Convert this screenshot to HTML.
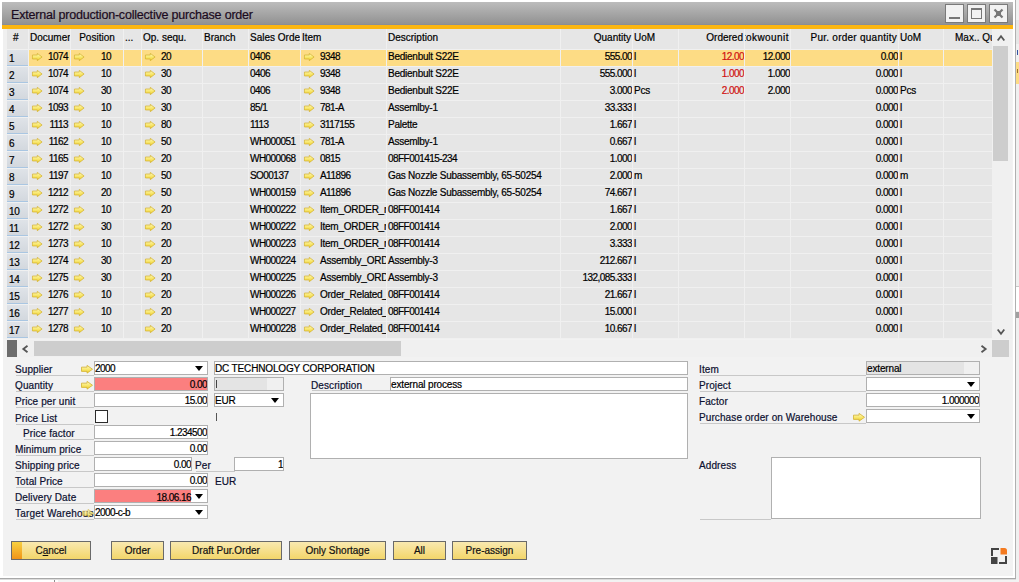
<!DOCTYPE html><html><head><meta charset="utf-8"><style>
*{box-sizing:border-box}
body{margin:0;-webkit-text-stroke:0.2px currentColor;width:1019px;height:582px;overflow:hidden;position:relative;background:#fff;font-family:"Liberation Sans",sans-serif;font-size:10px;color:#000}
.a{position:absolute}
.t{position:absolute;white-space:pre;line-height:12px}
.hd{position:absolute;top:29px;height:20px;background:#e6e6e6}
.c{position:absolute;height:16px;background:#e6e6e6;overflow:hidden}
.sel{background:#fddc85}
.rh{position:absolute;height:16px;background:linear-gradient(#dfe3e8,#d3d8de);border-bottom:1px solid #a9c6e2}
.ct{position:absolute;white-space:pre;top:1px;line-height:12px;font-size:10px;letter-spacing:-0.25px}
.lbl{position:absolute;white-space:pre;line-height:12px;color:#0c1030;letter-spacing:0.1px}
.ul{position:absolute;height:1px;background:#c8c8c8}
.in{position:absolute;background:#fff;border:1px solid #b0b0b0;height:14px;overflow:hidden}
.in span{position:absolute;white-space:pre;top:1px;line-height:12px;font-size:9px}
.tri{position:absolute;width:0;height:0;border-left:4.5px solid transparent;border-right:4.5px solid transparent;border-top:5px solid #000}
.btn{position:absolute;top:541px;height:19px;border:1px solid #6a6a6a;background:linear-gradient(#f9e9b0,#f3d66a);text-align:center;line-height:18px;font-size:10px;color:#111}
</style></head><body>
<svg width="0" height="0" style="position:absolute"><defs><linearGradient id="ag" x1="0" y1="0" x2="0" y2="1"><stop offset="0" stop-color="#fdf8c0"/><stop offset="0.45" stop-color="#f9ea78"/><stop offset="1" stop-color="#f0cf2a"/></linearGradient></defs></svg>

<div class="a" style="left:1016px;top:0;width:3px;height:582px;background:#f0f0f0"></div>
<div class="a" style="left:1015px;top:0;width:1px;height:579px;background:#b0b0b0"></div>
<div class="a" style="left:1016px;top:20px;width:3px;height:24px;background:#e6e6e6"></div>
<div class="a" style="left:1016px;top:62px;width:3px;height:22px;background:#fddc85"></div>
<div class="a" style="left:1017px;top:50px;width:1px;height:5px;background:#3050a0"></div>
<div class="a" style="left:1017px;top:69px;width:1px;height:4px;background:#a07030"></div>
<div class="a" style="left:1016px;top:286px;width:3px;height:1px;background:#c8c8c8"></div>
<div class="a" style="left:1016px;top:287px;width:3px;height:24px;background:#ffffff"></div>
<div class="a" style="left:1016px;top:312px;width:3px;height:6px;background:#a0a0a0"></div>
<div class="a" style="left:0;top:578px;width:1016px;height:1px;background:#a8a8a8"></div>
<div class="a" style="left:58px;top:579px;width:961px;height:3px;background:#f2f2f2"></div>
<div class="a" style="left:0;top:579px;width:1016px;height:1px;background:#dcdcdc"></div>
<div class="a" style="left:54px;top:580px;width:1px;height:2px;background:#8c8c8c"></div>
<div class="a" style="left:3px;top:2px;width:1010px;height:574px;background:#f2f2f2"></div>
<div class="a" style="left:2px;top:2px;width:1011px;height:22px;background:linear-gradient(#bcbcbc,#929292)"></div>
<div class="a" style="left:2px;top:24px;width:1011px;height:1px;background:#8a8e96"></div>
<div class="a" style="left:2px;top:25px;width:1011px;height:4px;background:#fbb611"></div>
<div class="t" style="left:11px;top:8px;font-size:12.5px;letter-spacing:-0.2px;line-height:15px;color:#1a0a20">External production-collective purchase order</div>
<div class="a" style="left:945px;top:4px;width:19px;height:19px;background:#f2f2f2;border:1px solid #7a7a7a"></div>
<div class="a" style="left:967px;top:4px;width:19px;height:19px;background:#f2f2f2;border:1px solid #7a7a7a"></div>
<div class="a" style="left:989px;top:4px;width:19px;height:19px;background:#f2f2f2;border:1px solid #7a7a7a"></div>
<div class="a" style="left:949px;top:17px;width:11px;height:2px;background:#777"></div>
<div class="a" style="left:971px;top:8px;width:11px;height:11px;border:1px solid #777;border-top-width:2px"></div>
<svg class="a" style="left:993px;top:8px" width="11" height="11" viewBox="0 0 11 11"><path d="M1.5 1.5L9.5 9.5M9.5 1.5L1.5 9.5" stroke="#777" stroke-width="2.2"/><rect x="3" y="3" width="5" height="5" fill="#777"/></svg>
<div class="a" style="left:3px;top:29px;width:990px;height:310px;background:#f0f0f0"></div>
<div class="hd" style="left:7px;width:21px;overflow:hidden">
<div class="t" style="left:6px;top:3px">#</div>
</div>
<div class="hd" style="left:29px;width:41px;overflow:hidden">
<div class="t" style="left:1px;top:3px">Documer</div>
</div>
<div class="hd" style="left:71px;width:52px;overflow:hidden">
<div class="t" style="left:0;width:52px;text-align:center;top:3px">Position</div>
</div>
<div class="hd" style="left:124px;width:17px;overflow:hidden">
<div class="t" style="left:1px;top:3px">...</div>
</div>
<div class="hd" style="left:142px;width:60px;overflow:hidden">
<div class="t" style="left:1px;top:3px">Op. sequ.</div>
</div>
<div class="hd" style="left:203px;width:45px;overflow:hidden">
<div class="t" style="left:1px;top:3px">Branch</div>
</div>
<div class="hd" style="left:249px;width:51px;overflow:hidden">
<div class="t" style="left:1px;top:3px">Sales Order</div>
</div>
<div class="hd" style="left:301px;width:85px;overflow:hidden">
<div class="t" style="left:1px;top:3px">Item</div>
</div>
<div class="hd" style="left:387px;width:173px;overflow:hidden">
<div class="t" style="left:1px;top:3px">Description</div>
</div>
<div class="hd" style="left:561px;width:71px;overflow:hidden">
<div class="t" style="right:1px;top:3px">Quantity</div>
</div>
<div class="hd" style="left:633px;width:45px;overflow:hidden">
<div class="t" style="left:1px;top:3px">UoM</div>
</div>
<div class="hd" style="left:679px;width:65px;overflow:hidden">
<div class="t" style="right:1px;top:3px">Ordered</div>
</div>
<div class="hd" style="left:745px;width:45px;overflow:hidden">
<div class="t" style="right:1px;top:3px;letter-spacing:0.45px">Stokwounit</div>
</div>
<div class="hd" style="left:791px;width:107px;overflow:hidden">
<div class="t" style="right:1px;top:3px;letter-spacing:0.25px">Pur. order quantity</div>
</div>
<div class="hd" style="left:899px;width:44px;overflow:hidden">
<div class="t" style="left:1px;top:3px">UoM</div>
</div>
<div class="hd" style="left:944px;width:48px;overflow:hidden">
<div class="t" style="left:11px;top:3px">Max.. Quantity</div>
</div>
<div class="rh" style="left:7px;top:50px;width:21px"><div class="ct" style="left:2px;top:3px;font-size:10px;letter-spacing:-0.3px">1</div></div>
<div class="c sel" style="left:29px;top:50px;width:41px">
<svg style="position:absolute;left:3px;top:2.6px;overflow:visible" width="10.5" height="8" viewBox="0 0 10.5 8" preserveAspectRatio="none"><path d="M0.45 2.0H5.3V0.35L10.1 4L5.3 7.65V6.0H0.45Z" fill="url(#ag)" stroke="#d2b02e" stroke-width="0.7" stroke-linejoin="round"/></svg>
<div class="ct" style="right:2px;font-size:10px;letter-spacing:-0.55px">1074</div>
</div>
<div class="c sel" style="left:71px;top:50px;width:52px">
<svg style="position:absolute;left:3px;top:2.6px;overflow:visible" width="10.5" height="8" viewBox="0 0 10.5 8" preserveAspectRatio="none"><path d="M0.45 2.0H5.3V0.35L10.1 4L5.3 7.65V6.0H0.45Z" fill="url(#ag)" stroke="#d2b02e" stroke-width="0.7" stroke-linejoin="round"/></svg>
<div class="ct" style="right:12px;font-size:10px;letter-spacing:-0.55px">10</div>
</div>
<div class="c sel" style="left:124px;top:50px;width:17px">
</div>
<div class="c sel" style="left:142px;top:50px;width:60px">
<svg style="position:absolute;left:3px;top:2.6px;overflow:visible" width="10.5" height="8" viewBox="0 0 10.5 8" preserveAspectRatio="none"><path d="M0.45 2.0H5.3V0.35L10.1 4L5.3 7.65V6.0H0.45Z" fill="url(#ag)" stroke="#d2b02e" stroke-width="0.7" stroke-linejoin="round"/></svg>
<div class="ct" style="left:19px;font-size:10px;letter-spacing:-0.55px">20</div>
</div>
<div class="c sel" style="left:203px;top:50px;width:45px">
</div>
<div class="c sel" style="left:249px;top:50px;width:51px">
<div class="ct" style="left:1px;font-size:10px;letter-spacing:-0.55px">0406</div>
</div>
<div class="c sel" style="left:301px;top:50px;width:85px">
<svg style="position:absolute;left:3px;top:2.6px;overflow:visible" width="10.5" height="8" viewBox="0 0 10.5 8" preserveAspectRatio="none"><path d="M0.45 2.0H5.3V0.35L10.1 4L5.3 7.65V6.0H0.45Z" fill="url(#ag)" stroke="#d2b02e" stroke-width="0.7" stroke-linejoin="round"/></svg>
<div class="ct" style="left:19px;font-size:10px;letter-spacing:-0.55px">9348</div>
</div>
<div class="c sel" style="left:387px;top:50px;width:173px">
<div class="ct" style="left:1px">Bedienbult S22E</div>
</div>
<div class="c sel" style="left:561px;top:50px;width:71px">
<div class="ct" style="right:0px;font-size:10px;letter-spacing:-0.55px">555.00</div>
</div>
<div class="c sel" style="left:633px;top:50px;width:45px">
<div class="ct" style="left:1px">l</div>
</div>
<div class="c sel" style="left:679px;top:50px;width:65px">
<div class="ct" style="right:0px;font-size:10px;letter-spacing:-0.55px;color:#d01010">12.00</div>
</div>
<div class="c sel" style="left:745px;top:50px;width:45px">
<div class="ct" style="right:0px;font-size:10px;letter-spacing:-0.55px">12.000</div>
</div>
<div class="c sel" style="left:791px;top:50px;width:107px">
<div class="ct" style="right:0px;font-size:10px;letter-spacing:-0.55px">0.00</div>
</div>
<div class="c sel" style="left:899px;top:50px;width:44px">
<div class="ct" style="left:1px">l</div>
</div>
<div class="c sel" style="left:944px;top:50px;width:48px">
</div>
<div class="rh" style="left:7px;top:67px;width:21px"><div class="ct" style="left:2px;top:3px;font-size:10px;letter-spacing:-0.3px">2</div></div>
<div class="c" style="left:29px;top:67px;width:41px">
<svg style="position:absolute;left:3px;top:2.6px;overflow:visible" width="10.5" height="8" viewBox="0 0 10.5 8" preserveAspectRatio="none"><path d="M0.45 2.0H5.3V0.35L10.1 4L5.3 7.65V6.0H0.45Z" fill="url(#ag)" stroke="#d2b02e" stroke-width="0.7" stroke-linejoin="round"/></svg>
<div class="ct" style="right:2px;font-size:10px;letter-spacing:-0.55px">1074</div>
</div>
<div class="c" style="left:71px;top:67px;width:52px">
<svg style="position:absolute;left:3px;top:2.6px;overflow:visible" width="10.5" height="8" viewBox="0 0 10.5 8" preserveAspectRatio="none"><path d="M0.45 2.0H5.3V0.35L10.1 4L5.3 7.65V6.0H0.45Z" fill="url(#ag)" stroke="#d2b02e" stroke-width="0.7" stroke-linejoin="round"/></svg>
<div class="ct" style="right:12px;font-size:10px;letter-spacing:-0.55px">10</div>
</div>
<div class="c" style="left:124px;top:67px;width:17px">
</div>
<div class="c" style="left:142px;top:67px;width:60px">
<svg style="position:absolute;left:3px;top:2.6px;overflow:visible" width="10.5" height="8" viewBox="0 0 10.5 8" preserveAspectRatio="none"><path d="M0.45 2.0H5.3V0.35L10.1 4L5.3 7.65V6.0H0.45Z" fill="url(#ag)" stroke="#d2b02e" stroke-width="0.7" stroke-linejoin="round"/></svg>
<div class="ct" style="left:19px;font-size:10px;letter-spacing:-0.55px">30</div>
</div>
<div class="c" style="left:203px;top:67px;width:45px">
</div>
<div class="c" style="left:249px;top:67px;width:51px">
<div class="ct" style="left:1px;font-size:10px;letter-spacing:-0.55px">0406</div>
</div>
<div class="c" style="left:301px;top:67px;width:85px">
<svg style="position:absolute;left:3px;top:2.6px;overflow:visible" width="10.5" height="8" viewBox="0 0 10.5 8" preserveAspectRatio="none"><path d="M0.45 2.0H5.3V0.35L10.1 4L5.3 7.65V6.0H0.45Z" fill="url(#ag)" stroke="#d2b02e" stroke-width="0.7" stroke-linejoin="round"/></svg>
<div class="ct" style="left:19px;font-size:10px;letter-spacing:-0.55px">9348</div>
</div>
<div class="c" style="left:387px;top:67px;width:173px">
<div class="ct" style="left:1px">Bedienbult S22E</div>
</div>
<div class="c" style="left:561px;top:67px;width:71px">
<div class="ct" style="right:0px;font-size:10px;letter-spacing:-0.55px">555.000</div>
</div>
<div class="c" style="left:633px;top:67px;width:45px">
<div class="ct" style="left:1px">l</div>
</div>
<div class="c" style="left:679px;top:67px;width:65px">
<div class="ct" style="right:0px;font-size:10px;letter-spacing:-0.55px;color:#d01010">1.000</div>
</div>
<div class="c" style="left:745px;top:67px;width:45px">
<div class="ct" style="right:0px;font-size:10px;letter-spacing:-0.55px">1.000</div>
</div>
<div class="c" style="left:791px;top:67px;width:107px">
<div class="ct" style="right:0px;font-size:10px;letter-spacing:-0.55px">0.000</div>
</div>
<div class="c" style="left:899px;top:67px;width:44px">
<div class="ct" style="left:1px">l</div>
</div>
<div class="c" style="left:944px;top:67px;width:48px">
</div>
<div class="rh" style="left:7px;top:84px;width:21px"><div class="ct" style="left:2px;top:3px;font-size:10px;letter-spacing:-0.3px">3</div></div>
<div class="c" style="left:29px;top:84px;width:41px">
<svg style="position:absolute;left:3px;top:2.6px;overflow:visible" width="10.5" height="8" viewBox="0 0 10.5 8" preserveAspectRatio="none"><path d="M0.45 2.0H5.3V0.35L10.1 4L5.3 7.65V6.0H0.45Z" fill="url(#ag)" stroke="#d2b02e" stroke-width="0.7" stroke-linejoin="round"/></svg>
<div class="ct" style="right:2px;font-size:10px;letter-spacing:-0.55px">1074</div>
</div>
<div class="c" style="left:71px;top:84px;width:52px">
<svg style="position:absolute;left:3px;top:2.6px;overflow:visible" width="10.5" height="8" viewBox="0 0 10.5 8" preserveAspectRatio="none"><path d="M0.45 2.0H5.3V0.35L10.1 4L5.3 7.65V6.0H0.45Z" fill="url(#ag)" stroke="#d2b02e" stroke-width="0.7" stroke-linejoin="round"/></svg>
<div class="ct" style="right:12px;font-size:10px;letter-spacing:-0.55px">30</div>
</div>
<div class="c" style="left:124px;top:84px;width:17px">
</div>
<div class="c" style="left:142px;top:84px;width:60px">
<svg style="position:absolute;left:3px;top:2.6px;overflow:visible" width="10.5" height="8" viewBox="0 0 10.5 8" preserveAspectRatio="none"><path d="M0.45 2.0H5.3V0.35L10.1 4L5.3 7.65V6.0H0.45Z" fill="url(#ag)" stroke="#d2b02e" stroke-width="0.7" stroke-linejoin="round"/></svg>
<div class="ct" style="left:19px;font-size:10px;letter-spacing:-0.55px">30</div>
</div>
<div class="c" style="left:203px;top:84px;width:45px">
</div>
<div class="c" style="left:249px;top:84px;width:51px">
<div class="ct" style="left:1px;font-size:10px;letter-spacing:-0.55px">0406</div>
</div>
<div class="c" style="left:301px;top:84px;width:85px">
<svg style="position:absolute;left:3px;top:2.6px;overflow:visible" width="10.5" height="8" viewBox="0 0 10.5 8" preserveAspectRatio="none"><path d="M0.45 2.0H5.3V0.35L10.1 4L5.3 7.65V6.0H0.45Z" fill="url(#ag)" stroke="#d2b02e" stroke-width="0.7" stroke-linejoin="round"/></svg>
<div class="ct" style="left:19px;font-size:10px;letter-spacing:-0.55px">9348</div>
</div>
<div class="c" style="left:387px;top:84px;width:173px">
<div class="ct" style="left:1px">Bedienbult S22E</div>
</div>
<div class="c" style="left:561px;top:84px;width:71px">
<div class="ct" style="right:0px;font-size:10px;letter-spacing:-0.55px">3.000</div>
</div>
<div class="c" style="left:633px;top:84px;width:45px">
<div class="ct" style="left:1px">Pcs</div>
</div>
<div class="c" style="left:679px;top:84px;width:65px">
<div class="ct" style="right:0px;font-size:10px;letter-spacing:-0.55px;color:#d01010">2.000</div>
</div>
<div class="c" style="left:745px;top:84px;width:45px">
<div class="ct" style="right:0px;font-size:10px;letter-spacing:-0.55px">2.000</div>
</div>
<div class="c" style="left:791px;top:84px;width:107px">
<div class="ct" style="right:0px;font-size:10px;letter-spacing:-0.55px">0.000</div>
</div>
<div class="c" style="left:899px;top:84px;width:44px">
<div class="ct" style="left:1px">Pcs</div>
</div>
<div class="c" style="left:944px;top:84px;width:48px">
</div>
<div class="rh" style="left:7px;top:101px;width:21px"><div class="ct" style="left:2px;top:3px;font-size:10px;letter-spacing:-0.3px">4</div></div>
<div class="c" style="left:29px;top:101px;width:41px">
<svg style="position:absolute;left:3px;top:2.6px;overflow:visible" width="10.5" height="8" viewBox="0 0 10.5 8" preserveAspectRatio="none"><path d="M0.45 2.0H5.3V0.35L10.1 4L5.3 7.65V6.0H0.45Z" fill="url(#ag)" stroke="#d2b02e" stroke-width="0.7" stroke-linejoin="round"/></svg>
<div class="ct" style="right:2px;font-size:10px;letter-spacing:-0.55px">1093</div>
</div>
<div class="c" style="left:71px;top:101px;width:52px">
<svg style="position:absolute;left:3px;top:2.6px;overflow:visible" width="10.5" height="8" viewBox="0 0 10.5 8" preserveAspectRatio="none"><path d="M0.45 2.0H5.3V0.35L10.1 4L5.3 7.65V6.0H0.45Z" fill="url(#ag)" stroke="#d2b02e" stroke-width="0.7" stroke-linejoin="round"/></svg>
<div class="ct" style="right:12px;font-size:10px;letter-spacing:-0.55px">10</div>
</div>
<div class="c" style="left:124px;top:101px;width:17px">
</div>
<div class="c" style="left:142px;top:101px;width:60px">
<svg style="position:absolute;left:3px;top:2.6px;overflow:visible" width="10.5" height="8" viewBox="0 0 10.5 8" preserveAspectRatio="none"><path d="M0.45 2.0H5.3V0.35L10.1 4L5.3 7.65V6.0H0.45Z" fill="url(#ag)" stroke="#d2b02e" stroke-width="0.7" stroke-linejoin="round"/></svg>
<div class="ct" style="left:19px;font-size:10px;letter-spacing:-0.55px">30</div>
</div>
<div class="c" style="left:203px;top:101px;width:45px">
</div>
<div class="c" style="left:249px;top:101px;width:51px">
<div class="ct" style="left:1px;font-size:10px;letter-spacing:-0.55px">85/1</div>
</div>
<div class="c" style="left:301px;top:101px;width:85px">
<svg style="position:absolute;left:3px;top:2.6px;overflow:visible" width="10.5" height="8" viewBox="0 0 10.5 8" preserveAspectRatio="none"><path d="M0.45 2.0H5.3V0.35L10.1 4L5.3 7.65V6.0H0.45Z" fill="url(#ag)" stroke="#d2b02e" stroke-width="0.7" stroke-linejoin="round"/></svg>
<div class="ct" style="left:19px;font-size:10px;letter-spacing:-0.55px">781-A</div>
</div>
<div class="c" style="left:387px;top:101px;width:173px">
<div class="ct" style="left:1px">Assemlby-1</div>
</div>
<div class="c" style="left:561px;top:101px;width:71px">
<div class="ct" style="right:0px;font-size:10px;letter-spacing:-0.55px">33.333</div>
</div>
<div class="c" style="left:633px;top:101px;width:45px">
<div class="ct" style="left:1px">l</div>
</div>
<div class="c" style="left:679px;top:101px;width:65px">
</div>
<div class="c" style="left:745px;top:101px;width:45px">
</div>
<div class="c" style="left:791px;top:101px;width:107px">
<div class="ct" style="right:0px;font-size:10px;letter-spacing:-0.55px">0.000</div>
</div>
<div class="c" style="left:899px;top:101px;width:44px">
<div class="ct" style="left:1px">l</div>
</div>
<div class="c" style="left:944px;top:101px;width:48px">
</div>
<div class="rh" style="left:7px;top:118px;width:21px"><div class="ct" style="left:2px;top:3px;font-size:10px;letter-spacing:-0.3px">5</div></div>
<div class="c" style="left:29px;top:118px;width:41px">
<svg style="position:absolute;left:3px;top:2.6px;overflow:visible" width="10.5" height="8" viewBox="0 0 10.5 8" preserveAspectRatio="none"><path d="M0.45 2.0H5.3V0.35L10.1 4L5.3 7.65V6.0H0.45Z" fill="url(#ag)" stroke="#d2b02e" stroke-width="0.7" stroke-linejoin="round"/></svg>
<div class="ct" style="right:2px;font-size:10px;letter-spacing:-0.55px">1113</div>
</div>
<div class="c" style="left:71px;top:118px;width:52px">
<svg style="position:absolute;left:3px;top:2.6px;overflow:visible" width="10.5" height="8" viewBox="0 0 10.5 8" preserveAspectRatio="none"><path d="M0.45 2.0H5.3V0.35L10.1 4L5.3 7.65V6.0H0.45Z" fill="url(#ag)" stroke="#d2b02e" stroke-width="0.7" stroke-linejoin="round"/></svg>
<div class="ct" style="right:12px;font-size:10px;letter-spacing:-0.55px">10</div>
</div>
<div class="c" style="left:124px;top:118px;width:17px">
</div>
<div class="c" style="left:142px;top:118px;width:60px">
<svg style="position:absolute;left:3px;top:2.6px;overflow:visible" width="10.5" height="8" viewBox="0 0 10.5 8" preserveAspectRatio="none"><path d="M0.45 2.0H5.3V0.35L10.1 4L5.3 7.65V6.0H0.45Z" fill="url(#ag)" stroke="#d2b02e" stroke-width="0.7" stroke-linejoin="round"/></svg>
<div class="ct" style="left:19px;font-size:10px;letter-spacing:-0.55px">80</div>
</div>
<div class="c" style="left:203px;top:118px;width:45px">
</div>
<div class="c" style="left:249px;top:118px;width:51px">
<div class="ct" style="left:1px;font-size:10px;letter-spacing:-0.55px">1113</div>
</div>
<div class="c" style="left:301px;top:118px;width:85px">
<svg style="position:absolute;left:3px;top:2.6px;overflow:visible" width="10.5" height="8" viewBox="0 0 10.5 8" preserveAspectRatio="none"><path d="M0.45 2.0H5.3V0.35L10.1 4L5.3 7.65V6.0H0.45Z" fill="url(#ag)" stroke="#d2b02e" stroke-width="0.7" stroke-linejoin="round"/></svg>
<div class="ct" style="left:19px;font-size:10px;letter-spacing:-0.55px">3117155</div>
</div>
<div class="c" style="left:387px;top:118px;width:173px">
<div class="ct" style="left:1px">Palette</div>
</div>
<div class="c" style="left:561px;top:118px;width:71px">
<div class="ct" style="right:0px;font-size:10px;letter-spacing:-0.55px">1.667</div>
</div>
<div class="c" style="left:633px;top:118px;width:45px">
<div class="ct" style="left:1px">l</div>
</div>
<div class="c" style="left:679px;top:118px;width:65px">
</div>
<div class="c" style="left:745px;top:118px;width:45px">
</div>
<div class="c" style="left:791px;top:118px;width:107px">
<div class="ct" style="right:0px;font-size:10px;letter-spacing:-0.55px">0.000</div>
</div>
<div class="c" style="left:899px;top:118px;width:44px">
<div class="ct" style="left:1px">l</div>
</div>
<div class="c" style="left:944px;top:118px;width:48px">
</div>
<div class="rh" style="left:7px;top:135px;width:21px"><div class="ct" style="left:2px;top:3px;font-size:10px;letter-spacing:-0.3px">6</div></div>
<div class="c" style="left:29px;top:135px;width:41px">
<svg style="position:absolute;left:3px;top:2.6px;overflow:visible" width="10.5" height="8" viewBox="0 0 10.5 8" preserveAspectRatio="none"><path d="M0.45 2.0H5.3V0.35L10.1 4L5.3 7.65V6.0H0.45Z" fill="url(#ag)" stroke="#d2b02e" stroke-width="0.7" stroke-linejoin="round"/></svg>
<div class="ct" style="right:2px;font-size:10px;letter-spacing:-0.55px">1162</div>
</div>
<div class="c" style="left:71px;top:135px;width:52px">
<svg style="position:absolute;left:3px;top:2.6px;overflow:visible" width="10.5" height="8" viewBox="0 0 10.5 8" preserveAspectRatio="none"><path d="M0.45 2.0H5.3V0.35L10.1 4L5.3 7.65V6.0H0.45Z" fill="url(#ag)" stroke="#d2b02e" stroke-width="0.7" stroke-linejoin="round"/></svg>
<div class="ct" style="right:12px;font-size:10px;letter-spacing:-0.55px">10</div>
</div>
<div class="c" style="left:124px;top:135px;width:17px">
</div>
<div class="c" style="left:142px;top:135px;width:60px">
<svg style="position:absolute;left:3px;top:2.6px;overflow:visible" width="10.5" height="8" viewBox="0 0 10.5 8" preserveAspectRatio="none"><path d="M0.45 2.0H5.3V0.35L10.1 4L5.3 7.65V6.0H0.45Z" fill="url(#ag)" stroke="#d2b02e" stroke-width="0.7" stroke-linejoin="round"/></svg>
<div class="ct" style="left:19px;font-size:10px;letter-spacing:-0.55px">50</div>
</div>
<div class="c" style="left:203px;top:135px;width:45px">
</div>
<div class="c" style="left:249px;top:135px;width:51px">
<div class="ct" style="left:1px;font-size:10px;letter-spacing:-0.55px">WH000051</div>
</div>
<div class="c" style="left:301px;top:135px;width:85px">
<svg style="position:absolute;left:3px;top:2.6px;overflow:visible" width="10.5" height="8" viewBox="0 0 10.5 8" preserveAspectRatio="none"><path d="M0.45 2.0H5.3V0.35L10.1 4L5.3 7.65V6.0H0.45Z" fill="url(#ag)" stroke="#d2b02e" stroke-width="0.7" stroke-linejoin="round"/></svg>
<div class="ct" style="left:19px;font-size:10px;letter-spacing:-0.55px">781-A</div>
</div>
<div class="c" style="left:387px;top:135px;width:173px">
<div class="ct" style="left:1px">Assemlby-1</div>
</div>
<div class="c" style="left:561px;top:135px;width:71px">
<div class="ct" style="right:0px;font-size:10px;letter-spacing:-0.55px">0.667</div>
</div>
<div class="c" style="left:633px;top:135px;width:45px">
<div class="ct" style="left:1px">l</div>
</div>
<div class="c" style="left:679px;top:135px;width:65px">
</div>
<div class="c" style="left:745px;top:135px;width:45px">
</div>
<div class="c" style="left:791px;top:135px;width:107px">
<div class="ct" style="right:0px;font-size:10px;letter-spacing:-0.55px">0.000</div>
</div>
<div class="c" style="left:899px;top:135px;width:44px">
<div class="ct" style="left:1px">l</div>
</div>
<div class="c" style="left:944px;top:135px;width:48px">
</div>
<div class="rh" style="left:7px;top:152px;width:21px"><div class="ct" style="left:2px;top:3px;font-size:10px;letter-spacing:-0.3px">7</div></div>
<div class="c" style="left:29px;top:152px;width:41px">
<svg style="position:absolute;left:3px;top:2.6px;overflow:visible" width="10.5" height="8" viewBox="0 0 10.5 8" preserveAspectRatio="none"><path d="M0.45 2.0H5.3V0.35L10.1 4L5.3 7.65V6.0H0.45Z" fill="url(#ag)" stroke="#d2b02e" stroke-width="0.7" stroke-linejoin="round"/></svg>
<div class="ct" style="right:2px;font-size:10px;letter-spacing:-0.55px">1165</div>
</div>
<div class="c" style="left:71px;top:152px;width:52px">
<svg style="position:absolute;left:3px;top:2.6px;overflow:visible" width="10.5" height="8" viewBox="0 0 10.5 8" preserveAspectRatio="none"><path d="M0.45 2.0H5.3V0.35L10.1 4L5.3 7.65V6.0H0.45Z" fill="url(#ag)" stroke="#d2b02e" stroke-width="0.7" stroke-linejoin="round"/></svg>
<div class="ct" style="right:12px;font-size:10px;letter-spacing:-0.55px">10</div>
</div>
<div class="c" style="left:124px;top:152px;width:17px">
</div>
<div class="c" style="left:142px;top:152px;width:60px">
<svg style="position:absolute;left:3px;top:2.6px;overflow:visible" width="10.5" height="8" viewBox="0 0 10.5 8" preserveAspectRatio="none"><path d="M0.45 2.0H5.3V0.35L10.1 4L5.3 7.65V6.0H0.45Z" fill="url(#ag)" stroke="#d2b02e" stroke-width="0.7" stroke-linejoin="round"/></svg>
<div class="ct" style="left:19px;font-size:10px;letter-spacing:-0.55px">20</div>
</div>
<div class="c" style="left:203px;top:152px;width:45px">
</div>
<div class="c" style="left:249px;top:152px;width:51px">
<div class="ct" style="left:1px;font-size:10px;letter-spacing:-0.55px">WH000068</div>
</div>
<div class="c" style="left:301px;top:152px;width:85px">
<svg style="position:absolute;left:3px;top:2.6px;overflow:visible" width="10.5" height="8" viewBox="0 0 10.5 8" preserveAspectRatio="none"><path d="M0.45 2.0H5.3V0.35L10.1 4L5.3 7.65V6.0H0.45Z" fill="url(#ag)" stroke="#d2b02e" stroke-width="0.7" stroke-linejoin="round"/></svg>
<div class="ct" style="left:19px;font-size:10px;letter-spacing:-0.55px">0815</div>
</div>
<div class="c" style="left:387px;top:152px;width:173px">
<div class="ct" style="left:1px;font-size:10px;letter-spacing:-0.55px">08FF001415-234</div>
</div>
<div class="c" style="left:561px;top:152px;width:71px">
<div class="ct" style="right:0px;font-size:10px;letter-spacing:-0.55px">1.000</div>
</div>
<div class="c" style="left:633px;top:152px;width:45px">
<div class="ct" style="left:1px">l</div>
</div>
<div class="c" style="left:679px;top:152px;width:65px">
</div>
<div class="c" style="left:745px;top:152px;width:45px">
</div>
<div class="c" style="left:791px;top:152px;width:107px">
<div class="ct" style="right:0px;font-size:10px;letter-spacing:-0.55px">0.000</div>
</div>
<div class="c" style="left:899px;top:152px;width:44px">
<div class="ct" style="left:1px">l</div>
</div>
<div class="c" style="left:944px;top:152px;width:48px">
</div>
<div class="rh" style="left:7px;top:169px;width:21px"><div class="ct" style="left:2px;top:3px;font-size:10px;letter-spacing:-0.3px">8</div></div>
<div class="c" style="left:29px;top:169px;width:41px">
<svg style="position:absolute;left:3px;top:2.6px;overflow:visible" width="10.5" height="8" viewBox="0 0 10.5 8" preserveAspectRatio="none"><path d="M0.45 2.0H5.3V0.35L10.1 4L5.3 7.65V6.0H0.45Z" fill="url(#ag)" stroke="#d2b02e" stroke-width="0.7" stroke-linejoin="round"/></svg>
<div class="ct" style="right:2px;font-size:10px;letter-spacing:-0.55px">1197</div>
</div>
<div class="c" style="left:71px;top:169px;width:52px">
<svg style="position:absolute;left:3px;top:2.6px;overflow:visible" width="10.5" height="8" viewBox="0 0 10.5 8" preserveAspectRatio="none"><path d="M0.45 2.0H5.3V0.35L10.1 4L5.3 7.65V6.0H0.45Z" fill="url(#ag)" stroke="#d2b02e" stroke-width="0.7" stroke-linejoin="round"/></svg>
<div class="ct" style="right:12px;font-size:10px;letter-spacing:-0.55px">10</div>
</div>
<div class="c" style="left:124px;top:169px;width:17px">
</div>
<div class="c" style="left:142px;top:169px;width:60px">
<svg style="position:absolute;left:3px;top:2.6px;overflow:visible" width="10.5" height="8" viewBox="0 0 10.5 8" preserveAspectRatio="none"><path d="M0.45 2.0H5.3V0.35L10.1 4L5.3 7.65V6.0H0.45Z" fill="url(#ag)" stroke="#d2b02e" stroke-width="0.7" stroke-linejoin="round"/></svg>
<div class="ct" style="left:19px;font-size:10px;letter-spacing:-0.55px">50</div>
</div>
<div class="c" style="left:203px;top:169px;width:45px">
</div>
<div class="c" style="left:249px;top:169px;width:51px">
<div class="ct" style="left:1px;font-size:10px;letter-spacing:-0.55px">SO00137</div>
</div>
<div class="c" style="left:301px;top:169px;width:85px">
<svg style="position:absolute;left:3px;top:2.6px;overflow:visible" width="10.5" height="8" viewBox="0 0 10.5 8" preserveAspectRatio="none"><path d="M0.45 2.0H5.3V0.35L10.1 4L5.3 7.65V6.0H0.45Z" fill="url(#ag)" stroke="#d2b02e" stroke-width="0.7" stroke-linejoin="round"/></svg>
<div class="ct" style="left:19px;font-size:10px;letter-spacing:-0.55px">A11896</div>
</div>
<div class="c" style="left:387px;top:169px;width:173px">
<div class="ct" style="left:1px">Gas Nozzle Subassembly, 65-50254</div>
</div>
<div class="c" style="left:561px;top:169px;width:71px">
<div class="ct" style="right:0px;font-size:10px;letter-spacing:-0.55px">2.000</div>
</div>
<div class="c" style="left:633px;top:169px;width:45px">
<div class="ct" style="left:1px">m</div>
</div>
<div class="c" style="left:679px;top:169px;width:65px">
</div>
<div class="c" style="left:745px;top:169px;width:45px">
</div>
<div class="c" style="left:791px;top:169px;width:107px">
<div class="ct" style="right:0px;font-size:10px;letter-spacing:-0.55px">0.000</div>
</div>
<div class="c" style="left:899px;top:169px;width:44px">
<div class="ct" style="left:1px">m</div>
</div>
<div class="c" style="left:944px;top:169px;width:48px">
</div>
<div class="rh" style="left:7px;top:186px;width:21px"><div class="ct" style="left:2px;top:3px;font-size:10px;letter-spacing:-0.3px">9</div></div>
<div class="c" style="left:29px;top:186px;width:41px">
<svg style="position:absolute;left:3px;top:2.6px;overflow:visible" width="10.5" height="8" viewBox="0 0 10.5 8" preserveAspectRatio="none"><path d="M0.45 2.0H5.3V0.35L10.1 4L5.3 7.65V6.0H0.45Z" fill="url(#ag)" stroke="#d2b02e" stroke-width="0.7" stroke-linejoin="round"/></svg>
<div class="ct" style="right:2px;font-size:10px;letter-spacing:-0.55px">1212</div>
</div>
<div class="c" style="left:71px;top:186px;width:52px">
<svg style="position:absolute;left:3px;top:2.6px;overflow:visible" width="10.5" height="8" viewBox="0 0 10.5 8" preserveAspectRatio="none"><path d="M0.45 2.0H5.3V0.35L10.1 4L5.3 7.65V6.0H0.45Z" fill="url(#ag)" stroke="#d2b02e" stroke-width="0.7" stroke-linejoin="round"/></svg>
<div class="ct" style="right:12px;font-size:10px;letter-spacing:-0.55px">20</div>
</div>
<div class="c" style="left:124px;top:186px;width:17px">
</div>
<div class="c" style="left:142px;top:186px;width:60px">
<svg style="position:absolute;left:3px;top:2.6px;overflow:visible" width="10.5" height="8" viewBox="0 0 10.5 8" preserveAspectRatio="none"><path d="M0.45 2.0H5.3V0.35L10.1 4L5.3 7.65V6.0H0.45Z" fill="url(#ag)" stroke="#d2b02e" stroke-width="0.7" stroke-linejoin="round"/></svg>
<div class="ct" style="left:19px;font-size:10px;letter-spacing:-0.55px">50</div>
</div>
<div class="c" style="left:203px;top:186px;width:45px">
</div>
<div class="c" style="left:249px;top:186px;width:51px">
<div class="ct" style="left:1px;font-size:10px;letter-spacing:-0.55px">WH000159</div>
</div>
<div class="c" style="left:301px;top:186px;width:85px">
<svg style="position:absolute;left:3px;top:2.6px;overflow:visible" width="10.5" height="8" viewBox="0 0 10.5 8" preserveAspectRatio="none"><path d="M0.45 2.0H5.3V0.35L10.1 4L5.3 7.65V6.0H0.45Z" fill="url(#ag)" stroke="#d2b02e" stroke-width="0.7" stroke-linejoin="round"/></svg>
<div class="ct" style="left:19px;font-size:10px;letter-spacing:-0.55px">A11896</div>
</div>
<div class="c" style="left:387px;top:186px;width:173px">
<div class="ct" style="left:1px">Gas Nozzle Subassembly, 65-50254</div>
</div>
<div class="c" style="left:561px;top:186px;width:71px">
<div class="ct" style="right:0px;font-size:10px;letter-spacing:-0.55px">74.667</div>
</div>
<div class="c" style="left:633px;top:186px;width:45px">
<div class="ct" style="left:1px">l</div>
</div>
<div class="c" style="left:679px;top:186px;width:65px">
</div>
<div class="c" style="left:745px;top:186px;width:45px">
</div>
<div class="c" style="left:791px;top:186px;width:107px">
<div class="ct" style="right:0px;font-size:10px;letter-spacing:-0.55px">0.000</div>
</div>
<div class="c" style="left:899px;top:186px;width:44px">
<div class="ct" style="left:1px">l</div>
</div>
<div class="c" style="left:944px;top:186px;width:48px">
</div>
<div class="rh" style="left:7px;top:203px;width:21px"><div class="ct" style="left:2px;top:3px;font-size:10px;letter-spacing:-0.3px">10</div></div>
<div class="c" style="left:29px;top:203px;width:41px">
<svg style="position:absolute;left:3px;top:2.6px;overflow:visible" width="10.5" height="8" viewBox="0 0 10.5 8" preserveAspectRatio="none"><path d="M0.45 2.0H5.3V0.35L10.1 4L5.3 7.65V6.0H0.45Z" fill="url(#ag)" stroke="#d2b02e" stroke-width="0.7" stroke-linejoin="round"/></svg>
<div class="ct" style="right:2px;font-size:10px;letter-spacing:-0.55px">1272</div>
</div>
<div class="c" style="left:71px;top:203px;width:52px">
<svg style="position:absolute;left:3px;top:2.6px;overflow:visible" width="10.5" height="8" viewBox="0 0 10.5 8" preserveAspectRatio="none"><path d="M0.45 2.0H5.3V0.35L10.1 4L5.3 7.65V6.0H0.45Z" fill="url(#ag)" stroke="#d2b02e" stroke-width="0.7" stroke-linejoin="round"/></svg>
<div class="ct" style="right:12px;font-size:10px;letter-spacing:-0.55px">10</div>
</div>
<div class="c" style="left:124px;top:203px;width:17px">
</div>
<div class="c" style="left:142px;top:203px;width:60px">
<svg style="position:absolute;left:3px;top:2.6px;overflow:visible" width="10.5" height="8" viewBox="0 0 10.5 8" preserveAspectRatio="none"><path d="M0.45 2.0H5.3V0.35L10.1 4L5.3 7.65V6.0H0.45Z" fill="url(#ag)" stroke="#d2b02e" stroke-width="0.7" stroke-linejoin="round"/></svg>
<div class="ct" style="left:19px;font-size:10px;letter-spacing:-0.55px">20</div>
</div>
<div class="c" style="left:203px;top:203px;width:45px">
</div>
<div class="c" style="left:249px;top:203px;width:51px">
<div class="ct" style="left:1px;font-size:10px;letter-spacing:-0.55px">WH000222</div>
</div>
<div class="c" style="left:301px;top:203px;width:85px">
<svg style="position:absolute;left:3px;top:2.6px;overflow:visible" width="10.5" height="8" viewBox="0 0 10.5 8" preserveAspectRatio="none"><path d="M0.45 2.0H5.3V0.35L10.1 4L5.3 7.65V6.0H0.45Z" fill="url(#ag)" stroke="#d2b02e" stroke-width="0.7" stroke-linejoin="round"/></svg>
<div class="ct" style="left:19px">Item_ORDER_related</div>
</div>
<div class="c" style="left:387px;top:203px;width:173px">
<div class="ct" style="left:1px;font-size:10px;letter-spacing:-0.55px">08FF001414</div>
</div>
<div class="c" style="left:561px;top:203px;width:71px">
<div class="ct" style="right:0px;font-size:10px;letter-spacing:-0.55px">1.667</div>
</div>
<div class="c" style="left:633px;top:203px;width:45px">
<div class="ct" style="left:1px">l</div>
</div>
<div class="c" style="left:679px;top:203px;width:65px">
</div>
<div class="c" style="left:745px;top:203px;width:45px">
</div>
<div class="c" style="left:791px;top:203px;width:107px">
<div class="ct" style="right:0px;font-size:10px;letter-spacing:-0.55px">0.000</div>
</div>
<div class="c" style="left:899px;top:203px;width:44px">
<div class="ct" style="left:1px">l</div>
</div>
<div class="c" style="left:944px;top:203px;width:48px">
</div>
<div class="rh" style="left:7px;top:220px;width:21px"><div class="ct" style="left:2px;top:3px;font-size:10px;letter-spacing:-0.3px">11</div></div>
<div class="c" style="left:29px;top:220px;width:41px">
<svg style="position:absolute;left:3px;top:2.6px;overflow:visible" width="10.5" height="8" viewBox="0 0 10.5 8" preserveAspectRatio="none"><path d="M0.45 2.0H5.3V0.35L10.1 4L5.3 7.65V6.0H0.45Z" fill="url(#ag)" stroke="#d2b02e" stroke-width="0.7" stroke-linejoin="round"/></svg>
<div class="ct" style="right:2px;font-size:10px;letter-spacing:-0.55px">1272</div>
</div>
<div class="c" style="left:71px;top:220px;width:52px">
<svg style="position:absolute;left:3px;top:2.6px;overflow:visible" width="10.5" height="8" viewBox="0 0 10.5 8" preserveAspectRatio="none"><path d="M0.45 2.0H5.3V0.35L10.1 4L5.3 7.65V6.0H0.45Z" fill="url(#ag)" stroke="#d2b02e" stroke-width="0.7" stroke-linejoin="round"/></svg>
<div class="ct" style="right:12px;font-size:10px;letter-spacing:-0.55px">30</div>
</div>
<div class="c" style="left:124px;top:220px;width:17px">
</div>
<div class="c" style="left:142px;top:220px;width:60px">
<svg style="position:absolute;left:3px;top:2.6px;overflow:visible" width="10.5" height="8" viewBox="0 0 10.5 8" preserveAspectRatio="none"><path d="M0.45 2.0H5.3V0.35L10.1 4L5.3 7.65V6.0H0.45Z" fill="url(#ag)" stroke="#d2b02e" stroke-width="0.7" stroke-linejoin="round"/></svg>
<div class="ct" style="left:19px;font-size:10px;letter-spacing:-0.55px">20</div>
</div>
<div class="c" style="left:203px;top:220px;width:45px">
</div>
<div class="c" style="left:249px;top:220px;width:51px">
<div class="ct" style="left:1px;font-size:10px;letter-spacing:-0.55px">WH000222</div>
</div>
<div class="c" style="left:301px;top:220px;width:85px">
<svg style="position:absolute;left:3px;top:2.6px;overflow:visible" width="10.5" height="8" viewBox="0 0 10.5 8" preserveAspectRatio="none"><path d="M0.45 2.0H5.3V0.35L10.1 4L5.3 7.65V6.0H0.45Z" fill="url(#ag)" stroke="#d2b02e" stroke-width="0.7" stroke-linejoin="round"/></svg>
<div class="ct" style="left:19px">Item_ORDER_related</div>
</div>
<div class="c" style="left:387px;top:220px;width:173px">
<div class="ct" style="left:1px;font-size:10px;letter-spacing:-0.55px">08FF001414</div>
</div>
<div class="c" style="left:561px;top:220px;width:71px">
<div class="ct" style="right:0px;font-size:10px;letter-spacing:-0.55px">2.000</div>
</div>
<div class="c" style="left:633px;top:220px;width:45px">
<div class="ct" style="left:1px">l</div>
</div>
<div class="c" style="left:679px;top:220px;width:65px">
</div>
<div class="c" style="left:745px;top:220px;width:45px">
</div>
<div class="c" style="left:791px;top:220px;width:107px">
<div class="ct" style="right:0px;font-size:10px;letter-spacing:-0.55px">0.000</div>
</div>
<div class="c" style="left:899px;top:220px;width:44px">
<div class="ct" style="left:1px">l</div>
</div>
<div class="c" style="left:944px;top:220px;width:48px">
</div>
<div class="rh" style="left:7px;top:237px;width:21px"><div class="ct" style="left:2px;top:3px;font-size:10px;letter-spacing:-0.3px">12</div></div>
<div class="c" style="left:29px;top:237px;width:41px">
<svg style="position:absolute;left:3px;top:2.6px;overflow:visible" width="10.5" height="8" viewBox="0 0 10.5 8" preserveAspectRatio="none"><path d="M0.45 2.0H5.3V0.35L10.1 4L5.3 7.65V6.0H0.45Z" fill="url(#ag)" stroke="#d2b02e" stroke-width="0.7" stroke-linejoin="round"/></svg>
<div class="ct" style="right:2px;font-size:10px;letter-spacing:-0.55px">1273</div>
</div>
<div class="c" style="left:71px;top:237px;width:52px">
<svg style="position:absolute;left:3px;top:2.6px;overflow:visible" width="10.5" height="8" viewBox="0 0 10.5 8" preserveAspectRatio="none"><path d="M0.45 2.0H5.3V0.35L10.1 4L5.3 7.65V6.0H0.45Z" fill="url(#ag)" stroke="#d2b02e" stroke-width="0.7" stroke-linejoin="round"/></svg>
<div class="ct" style="right:12px;font-size:10px;letter-spacing:-0.55px">10</div>
</div>
<div class="c" style="left:124px;top:237px;width:17px">
</div>
<div class="c" style="left:142px;top:237px;width:60px">
<svg style="position:absolute;left:3px;top:2.6px;overflow:visible" width="10.5" height="8" viewBox="0 0 10.5 8" preserveAspectRatio="none"><path d="M0.45 2.0H5.3V0.35L10.1 4L5.3 7.65V6.0H0.45Z" fill="url(#ag)" stroke="#d2b02e" stroke-width="0.7" stroke-linejoin="round"/></svg>
<div class="ct" style="left:19px;font-size:10px;letter-spacing:-0.55px">20</div>
</div>
<div class="c" style="left:203px;top:237px;width:45px">
</div>
<div class="c" style="left:249px;top:237px;width:51px">
<div class="ct" style="left:1px;font-size:10px;letter-spacing:-0.55px">WH000223</div>
</div>
<div class="c" style="left:301px;top:237px;width:85px">
<svg style="position:absolute;left:3px;top:2.6px;overflow:visible" width="10.5" height="8" viewBox="0 0 10.5 8" preserveAspectRatio="none"><path d="M0.45 2.0H5.3V0.35L10.1 4L5.3 7.65V6.0H0.45Z" fill="url(#ag)" stroke="#d2b02e" stroke-width="0.7" stroke-linejoin="round"/></svg>
<div class="ct" style="left:19px">Item_ORDER_related</div>
</div>
<div class="c" style="left:387px;top:237px;width:173px">
<div class="ct" style="left:1px;font-size:10px;letter-spacing:-0.55px">08FF001414</div>
</div>
<div class="c" style="left:561px;top:237px;width:71px">
<div class="ct" style="right:0px;font-size:10px;letter-spacing:-0.55px">3.333</div>
</div>
<div class="c" style="left:633px;top:237px;width:45px">
<div class="ct" style="left:1px">l</div>
</div>
<div class="c" style="left:679px;top:237px;width:65px">
</div>
<div class="c" style="left:745px;top:237px;width:45px">
</div>
<div class="c" style="left:791px;top:237px;width:107px">
<div class="ct" style="right:0px;font-size:10px;letter-spacing:-0.55px">0.000</div>
</div>
<div class="c" style="left:899px;top:237px;width:44px">
<div class="ct" style="left:1px">l</div>
</div>
<div class="c" style="left:944px;top:237px;width:48px">
</div>
<div class="rh" style="left:7px;top:254px;width:21px"><div class="ct" style="left:2px;top:3px;font-size:10px;letter-spacing:-0.3px">13</div></div>
<div class="c" style="left:29px;top:254px;width:41px">
<svg style="position:absolute;left:3px;top:2.6px;overflow:visible" width="10.5" height="8" viewBox="0 0 10.5 8" preserveAspectRatio="none"><path d="M0.45 2.0H5.3V0.35L10.1 4L5.3 7.65V6.0H0.45Z" fill="url(#ag)" stroke="#d2b02e" stroke-width="0.7" stroke-linejoin="round"/></svg>
<div class="ct" style="right:2px;font-size:10px;letter-spacing:-0.55px">1274</div>
</div>
<div class="c" style="left:71px;top:254px;width:52px">
<svg style="position:absolute;left:3px;top:2.6px;overflow:visible" width="10.5" height="8" viewBox="0 0 10.5 8" preserveAspectRatio="none"><path d="M0.45 2.0H5.3V0.35L10.1 4L5.3 7.65V6.0H0.45Z" fill="url(#ag)" stroke="#d2b02e" stroke-width="0.7" stroke-linejoin="round"/></svg>
<div class="ct" style="right:12px;font-size:10px;letter-spacing:-0.55px">30</div>
</div>
<div class="c" style="left:124px;top:254px;width:17px">
</div>
<div class="c" style="left:142px;top:254px;width:60px">
<svg style="position:absolute;left:3px;top:2.6px;overflow:visible" width="10.5" height="8" viewBox="0 0 10.5 8" preserveAspectRatio="none"><path d="M0.45 2.0H5.3V0.35L10.1 4L5.3 7.65V6.0H0.45Z" fill="url(#ag)" stroke="#d2b02e" stroke-width="0.7" stroke-linejoin="round"/></svg>
<div class="ct" style="left:19px;font-size:10px;letter-spacing:-0.55px">20</div>
</div>
<div class="c" style="left:203px;top:254px;width:45px">
</div>
<div class="c" style="left:249px;top:254px;width:51px">
<div class="ct" style="left:1px;font-size:10px;letter-spacing:-0.55px">WH000224</div>
</div>
<div class="c" style="left:301px;top:254px;width:85px">
<svg style="position:absolute;left:3px;top:2.6px;overflow:visible" width="10.5" height="8" viewBox="0 0 10.5 8" preserveAspectRatio="none"><path d="M0.45 2.0H5.3V0.35L10.1 4L5.3 7.65V6.0H0.45Z" fill="url(#ag)" stroke="#d2b02e" stroke-width="0.7" stroke-linejoin="round"/></svg>
<div class="ct" style="left:19px">Assembly_ORDER</div>
</div>
<div class="c" style="left:387px;top:254px;width:173px">
<div class="ct" style="left:1px">Assembly-3</div>
</div>
<div class="c" style="left:561px;top:254px;width:71px">
<div class="ct" style="right:0px;font-size:10px;letter-spacing:-0.55px">212.667</div>
</div>
<div class="c" style="left:633px;top:254px;width:45px">
<div class="ct" style="left:1px">l</div>
</div>
<div class="c" style="left:679px;top:254px;width:65px">
</div>
<div class="c" style="left:745px;top:254px;width:45px">
</div>
<div class="c" style="left:791px;top:254px;width:107px">
<div class="ct" style="right:0px;font-size:10px;letter-spacing:-0.55px">0.000</div>
</div>
<div class="c" style="left:899px;top:254px;width:44px">
<div class="ct" style="left:1px">l</div>
</div>
<div class="c" style="left:944px;top:254px;width:48px">
</div>
<div class="rh" style="left:7px;top:271px;width:21px"><div class="ct" style="left:2px;top:3px;font-size:10px;letter-spacing:-0.3px">14</div></div>
<div class="c" style="left:29px;top:271px;width:41px">
<svg style="position:absolute;left:3px;top:2.6px;overflow:visible" width="10.5" height="8" viewBox="0 0 10.5 8" preserveAspectRatio="none"><path d="M0.45 2.0H5.3V0.35L10.1 4L5.3 7.65V6.0H0.45Z" fill="url(#ag)" stroke="#d2b02e" stroke-width="0.7" stroke-linejoin="round"/></svg>
<div class="ct" style="right:2px;font-size:10px;letter-spacing:-0.55px">1275</div>
</div>
<div class="c" style="left:71px;top:271px;width:52px">
<svg style="position:absolute;left:3px;top:2.6px;overflow:visible" width="10.5" height="8" viewBox="0 0 10.5 8" preserveAspectRatio="none"><path d="M0.45 2.0H5.3V0.35L10.1 4L5.3 7.65V6.0H0.45Z" fill="url(#ag)" stroke="#d2b02e" stroke-width="0.7" stroke-linejoin="round"/></svg>
<div class="ct" style="right:12px;font-size:10px;letter-spacing:-0.55px">30</div>
</div>
<div class="c" style="left:124px;top:271px;width:17px">
</div>
<div class="c" style="left:142px;top:271px;width:60px">
<svg style="position:absolute;left:3px;top:2.6px;overflow:visible" width="10.5" height="8" viewBox="0 0 10.5 8" preserveAspectRatio="none"><path d="M0.45 2.0H5.3V0.35L10.1 4L5.3 7.65V6.0H0.45Z" fill="url(#ag)" stroke="#d2b02e" stroke-width="0.7" stroke-linejoin="round"/></svg>
<div class="ct" style="left:19px;font-size:10px;letter-spacing:-0.55px">20</div>
</div>
<div class="c" style="left:203px;top:271px;width:45px">
</div>
<div class="c" style="left:249px;top:271px;width:51px">
<div class="ct" style="left:1px;font-size:10px;letter-spacing:-0.55px">WH000225</div>
</div>
<div class="c" style="left:301px;top:271px;width:85px">
<svg style="position:absolute;left:3px;top:2.6px;overflow:visible" width="10.5" height="8" viewBox="0 0 10.5 8" preserveAspectRatio="none"><path d="M0.45 2.0H5.3V0.35L10.1 4L5.3 7.65V6.0H0.45Z" fill="url(#ag)" stroke="#d2b02e" stroke-width="0.7" stroke-linejoin="round"/></svg>
<div class="ct" style="left:19px">Assembly_ORDER</div>
</div>
<div class="c" style="left:387px;top:271px;width:173px">
<div class="ct" style="left:1px">Assembly-3</div>
</div>
<div class="c" style="left:561px;top:271px;width:71px">
<div class="ct" style="right:0px;font-size:10px;letter-spacing:-0.55px">132,085.333</div>
</div>
<div class="c" style="left:633px;top:271px;width:45px">
<div class="ct" style="left:1px">l</div>
</div>
<div class="c" style="left:679px;top:271px;width:65px">
</div>
<div class="c" style="left:745px;top:271px;width:45px">
</div>
<div class="c" style="left:791px;top:271px;width:107px">
<div class="ct" style="right:0px;font-size:10px;letter-spacing:-0.55px">0.000</div>
</div>
<div class="c" style="left:899px;top:271px;width:44px">
<div class="ct" style="left:1px">l</div>
</div>
<div class="c" style="left:944px;top:271px;width:48px">
</div>
<div class="rh" style="left:7px;top:288px;width:21px"><div class="ct" style="left:2px;top:3px;font-size:10px;letter-spacing:-0.3px">15</div></div>
<div class="c" style="left:29px;top:288px;width:41px">
<svg style="position:absolute;left:3px;top:2.6px;overflow:visible" width="10.5" height="8" viewBox="0 0 10.5 8" preserveAspectRatio="none"><path d="M0.45 2.0H5.3V0.35L10.1 4L5.3 7.65V6.0H0.45Z" fill="url(#ag)" stroke="#d2b02e" stroke-width="0.7" stroke-linejoin="round"/></svg>
<div class="ct" style="right:2px;font-size:10px;letter-spacing:-0.55px">1276</div>
</div>
<div class="c" style="left:71px;top:288px;width:52px">
<svg style="position:absolute;left:3px;top:2.6px;overflow:visible" width="10.5" height="8" viewBox="0 0 10.5 8" preserveAspectRatio="none"><path d="M0.45 2.0H5.3V0.35L10.1 4L5.3 7.65V6.0H0.45Z" fill="url(#ag)" stroke="#d2b02e" stroke-width="0.7" stroke-linejoin="round"/></svg>
<div class="ct" style="right:12px;font-size:10px;letter-spacing:-0.55px">10</div>
</div>
<div class="c" style="left:124px;top:288px;width:17px">
</div>
<div class="c" style="left:142px;top:288px;width:60px">
<svg style="position:absolute;left:3px;top:2.6px;overflow:visible" width="10.5" height="8" viewBox="0 0 10.5 8" preserveAspectRatio="none"><path d="M0.45 2.0H5.3V0.35L10.1 4L5.3 7.65V6.0H0.45Z" fill="url(#ag)" stroke="#d2b02e" stroke-width="0.7" stroke-linejoin="round"/></svg>
<div class="ct" style="left:19px;font-size:10px;letter-spacing:-0.55px">20</div>
</div>
<div class="c" style="left:203px;top:288px;width:45px">
</div>
<div class="c" style="left:249px;top:288px;width:51px">
<div class="ct" style="left:1px;font-size:10px;letter-spacing:-0.55px">WH000226</div>
</div>
<div class="c" style="left:301px;top:288px;width:85px">
<svg style="position:absolute;left:3px;top:2.6px;overflow:visible" width="10.5" height="8" viewBox="0 0 10.5 8" preserveAspectRatio="none"><path d="M0.45 2.0H5.3V0.35L10.1 4L5.3 7.65V6.0H0.45Z" fill="url(#ag)" stroke="#d2b02e" stroke-width="0.7" stroke-linejoin="round"/></svg>
<div class="ct" style="left:19px">Order_Related_item</div>
</div>
<div class="c" style="left:387px;top:288px;width:173px">
<div class="ct" style="left:1px;font-size:10px;letter-spacing:-0.55px">08FF001414</div>
</div>
<div class="c" style="left:561px;top:288px;width:71px">
<div class="ct" style="right:0px;font-size:10px;letter-spacing:-0.55px">21.667</div>
</div>
<div class="c" style="left:633px;top:288px;width:45px">
<div class="ct" style="left:1px">l</div>
</div>
<div class="c" style="left:679px;top:288px;width:65px">
</div>
<div class="c" style="left:745px;top:288px;width:45px">
</div>
<div class="c" style="left:791px;top:288px;width:107px">
<div class="ct" style="right:0px;font-size:10px;letter-spacing:-0.55px">0.000</div>
</div>
<div class="c" style="left:899px;top:288px;width:44px">
<div class="ct" style="left:1px">l</div>
</div>
<div class="c" style="left:944px;top:288px;width:48px">
</div>
<div class="rh" style="left:7px;top:305px;width:21px"><div class="ct" style="left:2px;top:3px;font-size:10px;letter-spacing:-0.3px">16</div></div>
<div class="c" style="left:29px;top:305px;width:41px">
<svg style="position:absolute;left:3px;top:2.6px;overflow:visible" width="10.5" height="8" viewBox="0 0 10.5 8" preserveAspectRatio="none"><path d="M0.45 2.0H5.3V0.35L10.1 4L5.3 7.65V6.0H0.45Z" fill="url(#ag)" stroke="#d2b02e" stroke-width="0.7" stroke-linejoin="round"/></svg>
<div class="ct" style="right:2px;font-size:10px;letter-spacing:-0.55px">1277</div>
</div>
<div class="c" style="left:71px;top:305px;width:52px">
<svg style="position:absolute;left:3px;top:2.6px;overflow:visible" width="10.5" height="8" viewBox="0 0 10.5 8" preserveAspectRatio="none"><path d="M0.45 2.0H5.3V0.35L10.1 4L5.3 7.65V6.0H0.45Z" fill="url(#ag)" stroke="#d2b02e" stroke-width="0.7" stroke-linejoin="round"/></svg>
<div class="ct" style="right:12px;font-size:10px;letter-spacing:-0.55px">10</div>
</div>
<div class="c" style="left:124px;top:305px;width:17px">
</div>
<div class="c" style="left:142px;top:305px;width:60px">
<svg style="position:absolute;left:3px;top:2.6px;overflow:visible" width="10.5" height="8" viewBox="0 0 10.5 8" preserveAspectRatio="none"><path d="M0.45 2.0H5.3V0.35L10.1 4L5.3 7.65V6.0H0.45Z" fill="url(#ag)" stroke="#d2b02e" stroke-width="0.7" stroke-linejoin="round"/></svg>
<div class="ct" style="left:19px;font-size:10px;letter-spacing:-0.55px">20</div>
</div>
<div class="c" style="left:203px;top:305px;width:45px">
</div>
<div class="c" style="left:249px;top:305px;width:51px">
<div class="ct" style="left:1px;font-size:10px;letter-spacing:-0.55px">WH000227</div>
</div>
<div class="c" style="left:301px;top:305px;width:85px">
<svg style="position:absolute;left:3px;top:2.6px;overflow:visible" width="10.5" height="8" viewBox="0 0 10.5 8" preserveAspectRatio="none"><path d="M0.45 2.0H5.3V0.35L10.1 4L5.3 7.65V6.0H0.45Z" fill="url(#ag)" stroke="#d2b02e" stroke-width="0.7" stroke-linejoin="round"/></svg>
<div class="ct" style="left:19px">Order_Related_item</div>
</div>
<div class="c" style="left:387px;top:305px;width:173px">
<div class="ct" style="left:1px;font-size:10px;letter-spacing:-0.55px">08FF001414</div>
</div>
<div class="c" style="left:561px;top:305px;width:71px">
<div class="ct" style="right:0px;font-size:10px;letter-spacing:-0.55px">15.000</div>
</div>
<div class="c" style="left:633px;top:305px;width:45px">
<div class="ct" style="left:1px">l</div>
</div>
<div class="c" style="left:679px;top:305px;width:65px">
</div>
<div class="c" style="left:745px;top:305px;width:45px">
</div>
<div class="c" style="left:791px;top:305px;width:107px">
<div class="ct" style="right:0px;font-size:10px;letter-spacing:-0.55px">0.000</div>
</div>
<div class="c" style="left:899px;top:305px;width:44px">
<div class="ct" style="left:1px">l</div>
</div>
<div class="c" style="left:944px;top:305px;width:48px">
</div>
<div class="rh" style="left:7px;top:322px;width:21px"><div class="ct" style="left:2px;top:3px;font-size:10px;letter-spacing:-0.3px">17</div></div>
<div class="c" style="left:29px;top:322px;width:41px">
<svg style="position:absolute;left:3px;top:2.6px;overflow:visible" width="10.5" height="8" viewBox="0 0 10.5 8" preserveAspectRatio="none"><path d="M0.45 2.0H5.3V0.35L10.1 4L5.3 7.65V6.0H0.45Z" fill="url(#ag)" stroke="#d2b02e" stroke-width="0.7" stroke-linejoin="round"/></svg>
<div class="ct" style="right:2px;font-size:10px;letter-spacing:-0.55px">1278</div>
</div>
<div class="c" style="left:71px;top:322px;width:52px">
<svg style="position:absolute;left:3px;top:2.6px;overflow:visible" width="10.5" height="8" viewBox="0 0 10.5 8" preserveAspectRatio="none"><path d="M0.45 2.0H5.3V0.35L10.1 4L5.3 7.65V6.0H0.45Z" fill="url(#ag)" stroke="#d2b02e" stroke-width="0.7" stroke-linejoin="round"/></svg>
<div class="ct" style="right:12px;font-size:10px;letter-spacing:-0.55px">10</div>
</div>
<div class="c" style="left:124px;top:322px;width:17px">
</div>
<div class="c" style="left:142px;top:322px;width:60px">
<svg style="position:absolute;left:3px;top:2.6px;overflow:visible" width="10.5" height="8" viewBox="0 0 10.5 8" preserveAspectRatio="none"><path d="M0.45 2.0H5.3V0.35L10.1 4L5.3 7.65V6.0H0.45Z" fill="url(#ag)" stroke="#d2b02e" stroke-width="0.7" stroke-linejoin="round"/></svg>
<div class="ct" style="left:19px;font-size:10px;letter-spacing:-0.55px">20</div>
</div>
<div class="c" style="left:203px;top:322px;width:45px">
</div>
<div class="c" style="left:249px;top:322px;width:51px">
<div class="ct" style="left:1px;font-size:10px;letter-spacing:-0.55px">WH000228</div>
</div>
<div class="c" style="left:301px;top:322px;width:85px">
<svg style="position:absolute;left:3px;top:2.6px;overflow:visible" width="10.5" height="8" viewBox="0 0 10.5 8" preserveAspectRatio="none"><path d="M0.45 2.0H5.3V0.35L10.1 4L5.3 7.65V6.0H0.45Z" fill="url(#ag)" stroke="#d2b02e" stroke-width="0.7" stroke-linejoin="round"/></svg>
<div class="ct" style="left:19px">Order_Related_item</div>
</div>
<div class="c" style="left:387px;top:322px;width:173px">
<div class="ct" style="left:1px;font-size:10px;letter-spacing:-0.55px">08FF001414</div>
</div>
<div class="c" style="left:561px;top:322px;width:71px">
<div class="ct" style="right:0px;font-size:10px;letter-spacing:-0.55px">10.667</div>
</div>
<div class="c" style="left:633px;top:322px;width:45px">
<div class="ct" style="left:1px">l</div>
</div>
<div class="c" style="left:679px;top:322px;width:65px">
</div>
<div class="c" style="left:745px;top:322px;width:45px">
</div>
<div class="c" style="left:791px;top:322px;width:107px">
<div class="ct" style="right:0px;font-size:10px;letter-spacing:-0.55px">0.000</div>
</div>
<div class="c" style="left:899px;top:322px;width:44px">
<div class="ct" style="left:1px">l</div>
</div>
<div class="c" style="left:944px;top:322px;width:48px">
</div>
<div class="a" style="left:993px;top:29px;width:19px;height:310px;background:#f0f0f0"></div>
<svg class="a" style="left:995.5px;top:33.5px" width="10" height="8" viewBox="0 0 10 8"><path d="M1.7 6.5L5 2.3L8.3 6.5" stroke="#555" stroke-width="1.8" fill="none"/></svg>
<div class="a" style="left:993px;top:46px;width:15px;height:115px;background:#cdcdcd"></div>
<svg class="a" style="left:995.5px;top:327.5px" width="10" height="8" viewBox="0 0 10 8"><path d="M1.7 1.5L5 5.7L8.3 1.5" stroke="#555" stroke-width="1.8" fill="none"/></svg>
<div class="a" style="left:7px;top:340px;width:1005px;height:17px;background:#f0f0f0"></div>
<div class="a" style="left:7px;top:340px;width:10px;height:17px;background:#6d6d6d"></div>
<svg class="a" style="left:21px;top:343.5px" width="8" height="10" viewBox="0 0 8 10"><path d="M6.5 1.7L2.3 5L6.5 8.3" stroke="#555" stroke-width="1.8" fill="none"/></svg>
<div class="a" style="left:34px;top:341px;width:367px;height:15px;background:#cdcdcd"></div>
<svg class="a" style="left:980px;top:343.5px" width="8" height="10" viewBox="0 0 8 10"><path d="M1.5 1.7L5.7 5L1.5 8.3" stroke="#555" stroke-width="1.8" fill="none"/></svg>
<div class="a" style="left:992px;top:340px;width:17px;height:17px;background:#cdcdcd"></div>
<div class="lbl" style="left:15px;top:364px;">Supplier</div>
<div class="ul" style="left:16px;top:375px;width:78px"></div>
<div class="lbl" style="left:15px;top:380px;">Quantity</div>
<div class="ul" style="left:16px;top:391px;width:78px"></div>
<div class="lbl" style="left:15px;top:396px;">Price per unit</div>
<div class="ul" style="left:16px;top:407px;width:78px"></div>
<div class="lbl" style="left:15px;top:413px">Price List</div>
<div class="ul" style="left:16px;top:424px;width:78px"></div>
<div class="lbl" style="left:23px;top:428px;">Price factor</div>
<div class="ul" style="left:24px;top:439px;width:70px"></div>
<div class="lbl" style="left:15px;top:444px;">Minimum price</div>
<div class="ul" style="left:16px;top:455px;width:78px"></div>
<div class="lbl" style="left:15px;top:460px;">Shipping price</div>
<div class="ul" style="left:16px;top:471px;width:78px"></div>
<div class="lbl" style="left:15px;top:476px;">Total Price</div>
<div class="ul" style="left:16px;top:487px;width:78px"></div>
<div class="lbl" style="left:15px;top:492px;">Delivery Date</div>
<div class="ul" style="left:16px;top:503px;width:78px"></div>
<div class="lbl" style="left:15px;top:508px;width:80px;overflow:hidden;letter-spacing:0.2px">Target Warehouse</div>
<div class="ul" style="left:16px;top:519px;width:78px"></div>
<svg style="position:absolute;left:81px;top:364.5px;overflow:visible" width="12" height="8.5" viewBox="0 0 10.5 8" preserveAspectRatio="none"><path d="M0.45 2.0H5.3V0.35L10.1 4L5.3 7.65V6.0H0.45Z" fill="url(#ag)" stroke="#d2b02e" stroke-width="0.7" stroke-linejoin="round"/></svg>
<svg style="position:absolute;left:81px;top:380.5px;overflow:visible" width="12" height="8.5" viewBox="0 0 10.5 8" preserveAspectRatio="none"><path d="M0.45 2.0H5.3V0.35L10.1 4L5.3 7.65V6.0H0.45Z" fill="url(#ag)" stroke="#d2b02e" stroke-width="0.7" stroke-linejoin="round"/></svg>
<div class="in" style="left:94px;top:361px;width:114px;height:14px;background:#fff"><span style="left:0px;font-size:10px;letter-spacing:-0.55px">2000</span></div>
<div class="tri" style="left:195px;top:366px"></div>
<div class="in" style="left:214px;top:361px;width:474px;height:14px;background:#fff"><span style="left:0px;font-size:10px;letter-spacing:-0.15px">DC TECHNOLOGY CORPORATION</span></div>
<div class="in" style="left:94px;top:377px;width:114px;height:14px;background:#fb7f7f"><span style="right:0px;font-size:10px;letter-spacing:-0.55px">0.00</span></div>
<div class="in" style="left:214px;top:377px;width:70px;height:14px;background:#f0f0f0"><div class="a" style="left:0;top:0;width:52px;height:12px;background:#e4e4e4"></div><div class="a" style="left:1px;top:2px;width:1px;height:8px;background:#444"></div></div>
<div class="in" style="left:94px;top:393px;width:114px;height:14px;background:#fff"><span style="right:0px;font-size:10px;letter-spacing:-0.55px">15.00</span></div>
<div class="in" style="left:214px;top:393px;width:70px;height:14px;background:#fff"><span style="left:0px;font-size:10px;letter-spacing:-0.15px">EUR</span></div>
<div class="tri" style="left:271px;top:398px"></div>
<div class="a" style="left:95px;top:410px;width:13px;height:13px;border:1.5px solid #2b2b2b;background:#fff"></div>
<div class="a" style="left:216px;top:413px;width:1px;height:8px;background:#555"></div>
<div class="in" style="left:94px;top:425px;width:114px;height:14px;background:#fff"><span style="right:0px;font-size:10px;letter-spacing:-0.55px">1.234500</span></div>
<div class="in" style="left:94px;top:441px;width:114px;height:14px;background:#fff"><span style="right:0px;font-size:10px;letter-spacing:-0.55px">0.00</span></div>
<div class="in" style="left:94px;top:457px;width:98px;height:14px;background:#fff"><span style="right:0px;font-size:10px;letter-spacing:-0.55px">0.00</span></div>
<div class="lbl" style="left:195px;top:460px">Per</div>
<div class="ul" style="left:196px;top:471px;width:39px"></div>
<div class="in" style="left:234px;top:457px;width:50px;height:14px;background:#fff"><span style="right:0px;font-size:10px;letter-spacing:-0.55px">1</span></div>
<div class="in" style="left:94px;top:473px;width:114px;height:14px;background:#fff"><span style="right:0px;font-size:10px;letter-spacing:-0.55px">0.00</span></div>
<div class="lbl" style="left:215px;top:476px">EUR</div>
<div class="in" style="left:94px;top:489px;width:114px;height:14px;background:#fff"><div class="a" style="left:0;top:0;width:96px;height:12px;background:#fb7f7f"></div><span style="right:16px;top:2px;font-size:10px;letter-spacing:-0.55px">18.06.16</span></div>
<div class="tri" style="left:195px;top:494px"></div>
<div class="in" style="left:94px;top:505px;width:114px;height:14px;background:#fff"><span style="left:0px;font-size:10px;letter-spacing:-0.55px">2000-c-b</span></div>
<div class="tri" style="left:195px;top:510px"></div>
<svg style="opacity:0.7;position:absolute;left:82px;top:508.5px;overflow:visible" width="12" height="8.5" viewBox="0 0 10.5 8" preserveAspectRatio="none"><path d="M0.45 2.0H5.3V0.35L10.1 4L5.3 7.65V6.0H0.45Z" fill="url(#ag)" stroke="#d2b02e" stroke-width="0.7" stroke-linejoin="round"/></svg>
<div class="lbl" style="left:311px;top:380px">Description</div>
<div class="ul" style="left:312px;top:390px;width:78px"></div>
<div class="in" style="left:390px;top:377px;width:298px;height:14px;background:#fff"><span style="left:0px;font-size:10px;letter-spacing:-0.15px">external process</span></div>
<div class="in" style="left:310px;top:393px;width:378px;height:66px;background:#fff"></div>
<div class="lbl" style="left:699px;top:364px">Item</div>
<div class="ul" style="left:700px;top:375px;width:166px"></div>
<div class="lbl" style="left:699px;top:380px">Project</div>
<div class="ul" style="left:700px;top:391px;width:166px"></div>
<div class="lbl" style="left:699px;top:396px">Factor</div>
<div class="lbl" style="left:699px;top:412px">Purchase order on Warehouse</div>
<div class="ul" style="left:700px;top:423px;width:166px"></div>
<div class="in" style="left:866px;top:361px;width:114px;height:14px;background:#f0f0f0"><div class="a" style="left:0;top:0;width:97px;height:12px;background:#e4e4e4"></div><span style="left:0px;font-size:10px;letter-spacing:-0.15px">external</span></div>
<div class="in" style="left:866px;top:377px;width:114px;height:14px;background:#fff"></div>
<div class="tri" style="left:967px;top:382px"></div>
<div class="in" style="left:866px;top:393px;width:114px;height:14px;background:#fff"><span style="right:0px;font-size:10px;letter-spacing:-0.55px">1.000000</span></div>
<div class="in" style="left:866px;top:409px;width:114px;height:14px;background:#fff"></div>
<div class="tri" style="left:967px;top:414px"></div>
<svg style="position:absolute;left:853px;top:412.5px;overflow:visible" width="12" height="8.5" viewBox="0 0 10.5 8" preserveAspectRatio="none"><path d="M0.45 2.0H5.3V0.35L10.1 4L5.3 7.65V6.0H0.45Z" fill="url(#ag)" stroke="#d2b02e" stroke-width="0.7" stroke-linejoin="round"/></svg>
<div class="lbl" style="left:699px;top:460px">Address</div>
<div class="ul" style="left:700px;top:519px;width:71px"></div>
<div class="in" style="left:771px;top:457px;width:210px;height:62px;background:#fff"></div>
<div class="btn" style="left:11px;width:80px">C<u>a</u>ncel</div>
<div class="btn" style="left:111px;width:53px">Order</div>
<div class="btn" style="left:170px;width:112px">Draft Pur.Order</div>
<div class="btn" style="left:289px;width:97px">Only Shortage</div>
<div class="btn" style="left:393px;width:53px">All</div>
<div class="btn" style="left:452px;width:75px">Pre-assign</div>
<div class="a" style="left:12px;top:542px;width:10px;height:17px;background:linear-gradient(#f8d040,#f09418)"></div>
<svg class="a" style="left:991px;top:548px" width="16" height="16" viewBox="0 0 16 16"><path d="M0 0H8V2H2V8H0Z" fill="#444"/><path d="M9.5 0H13.5A2.5 2.5 0 0 1 16 2.5V6.5H9.5Z" fill="#f47a1f"/><rect x="0" y="9" width="6.5" height="7" fill="#444"/><path d="M16 8V16H8V14H14V8Z" fill="#444"/></svg>
</body></html>
